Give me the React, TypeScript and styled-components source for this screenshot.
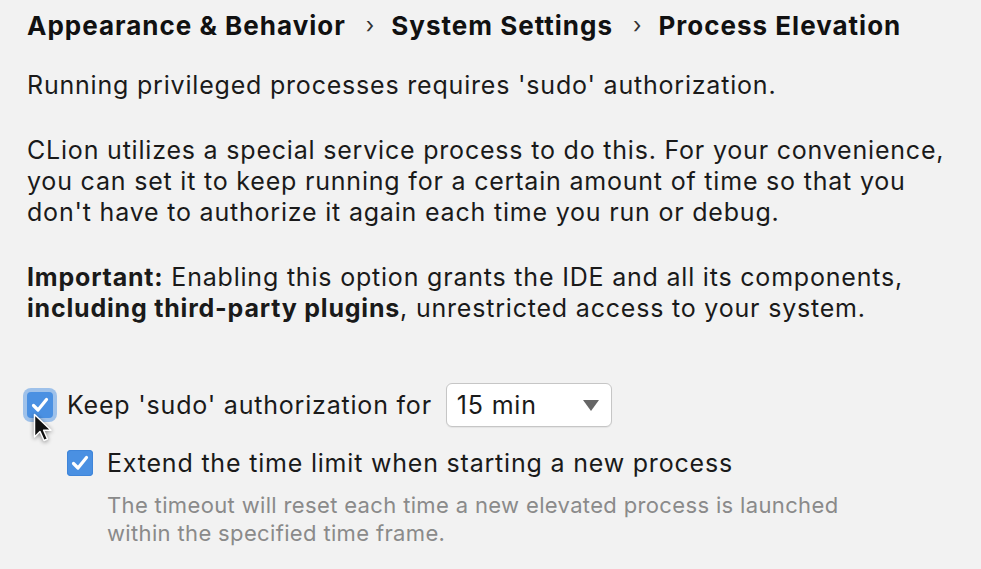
import styled, { createGlobalStyle } from "styled-components";

const GlobalStyle = createGlobalStyle`
  html, body {
    margin: 0;
    padding: 0;
    background: #f2f2f2;
  }
  body {
    font-family: Inter, "Noto Sans", "Liberation Sans", sans-serif;
    color: #1a1a1a;
    -webkit-font-smoothing: antialiased;
  }
`;

const Page = styled.div`
  width: 981px;
  height: 569px;
  box-sizing: border-box;
  padding: 8px 0 0 27px;
  overflow: hidden;
  background: #f2f2f2;
`;

const Breadcrumbs = styled.div`
  display: flex;
  align-items: center;
  height: 34px;
  font-size: 26px;
  font-weight: 700;
  color: #111;
  letter-spacing: 1px;
  white-space: nowrap;
`;

const Sep = styled.span`
  font-weight: 400;
  font-size: 22px;
  margin: 0 16px 0 20px;
  color: #333;
`;

const Text = styled.p`
  margin: 34px 0 0;
  font-size: 25px;
  line-height: 31px;
  letter-spacing: 0.8px;
  white-space: nowrap;
`;

const Intro = styled(Text)`
  margin-top: 28px;
`;

const Options = styled.div`
  display: flex;
  flex-direction: column;
  margin-top: 59px;
`;

const Row = styled.label<{ $indent?: number }>`
  position: relative;
  display: flex;
  align-items: center;
  gap: 14px;
  min-height: 31px;
  padding-left: ${(p) => p.$indent ?? 0}px;
  font-size: 25px;
  letter-spacing: 0.8px;
  white-space: nowrap;
`;

const Box = styled.span<{ $focused?: boolean }>`
  flex: none;
  width: 26px;
  height: 26px;
  border-radius: 4px;
  background: #4a90e2;
  display: flex;
  align-items: center;
  justify-content: center;
  box-shadow: ${(p) =>
    p.$focused ? "0 0 0 4px rgba(74, 144, 226, 0.5)" : "inset 0 0 0 1px #3f85d9"};
`;

const Select = styled.div`
  display: flex;
  align-items: center;
  justify-content: space-between;
  width: 166px;
  height: 44px;
  box-sizing: border-box;
  padding: 0 12px 0 10px;
  background: #fff;
  border: 1px solid #c6c6c6;
  border-radius: 6px;
  box-shadow: 0 1px 1px rgba(0, 0, 0, 0.06);
`;

const SecondRow = styled(Row)`
  margin-top: 20px;
`;

const Hint = styled.p`
  margin: 13px 0 0 80px;
  font-size: 22px;
  line-height: 28px;
  color: #8a8a8a;
  letter-spacing: 0.35px;
  white-space: nowrap;
`;

const Pointer = styled.svg`
  position: absolute;
  left: 6px;
  top: 30px;
  filter: drop-shadow(0 1px 2px rgba(0, 0, 0, 0.45));
`;

function Check() {
  return (
    <svg width="18" height="16" viewBox="0 0 18 16">
      <path
        d="M2.5 8.5 L7 13 L15.5 2.5"
        fill="none"
        stroke="#fff"
        strokeWidth="3.2"
        strokeLinecap="round"
        strokeLinejoin="round"
      />
    </svg>
  );
}

export default function App() {
  return (
    <Page>
      <GlobalStyle />
      <Breadcrumbs>
        Appearance &amp; Behavior<Sep>›</Sep>System Settings<Sep>›</Sep>Process Elevation
      </Breadcrumbs>

      <Intro>Running privileged processes requires 'sudo' authorization.</Intro>

      <Text>
        CLion utilizes a special service process to do this. For your convenience,
        <br />
        you can set it to keep running for a certain amount of time so that you
        <br />
        don't have to authorize it again each time you run or debug.
      </Text>

      <Text>
        <b>Important:</b> Enabling this option grants the IDE and all its components,
        <br />
        <b>including third-party plugins</b>, unrestricted access to your system.
      </Text>

      <Options>
        <Row>
          <Box $focused>
            <Check />
          </Box>
          Keep 'sudo' authorization for
          <Select>
            <span>15 min</span>
            <svg width="16" height="11" viewBox="0 0 16 11">
              <path d="M0 0 H16 L8 11 Z" fill="#666" />
            </svg>
          </Select>
          <Pointer width="20" height="30" viewBox="0 0 20 30">
            <path
              d="M1.5 1.5 V24 L7 18.5 L11 27.5 L14.5 26 L10.6 17.2 H18 Z"
              fill="#111"
              stroke="#fff"
              strokeWidth="1.5"
              strokeLinejoin="round"
            />
          </Pointer>
        </Row>

        <SecondRow $indent={40}>
          <Box>
            <Check />
          </Box>
          Extend the time limit when starting a new process
        </SecondRow>

        <Hint>
          The timeout will reset each time a new elevated process is launched
          <br />
          within the specified time frame.
        </Hint>
      </Options>
    </Page>
  );
}
